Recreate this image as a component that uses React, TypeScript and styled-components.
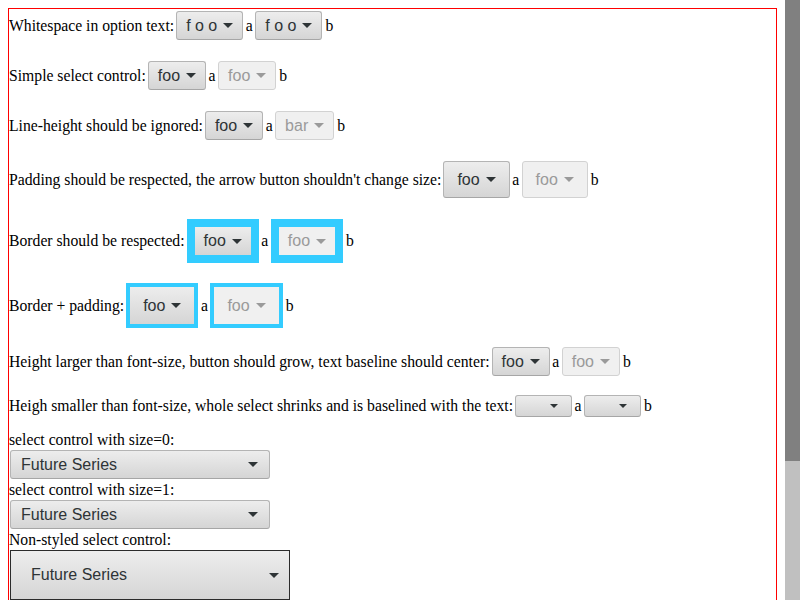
import styled, { createGlobalStyle } from "styled-components"

const GlobalStyle = createGlobalStyle`
    html, body {
        margin: 0;
        background: #ffffff;
    }
    body {
        font-family: "Liberation Serif", "Times New Roman", serif;
        font-size: 15.7px;
        color: #000000;
    }
`

const Page = styled.div`
    display: flex;
    height: 100vh;
    overflow: hidden;
`

const Content = styled.div`
    flex: 1;
    min-width: 0;
    padding: 8px;
`

const ScrollBar = styled.div`
    flex: none;
    width: 15px;
    background: #c0c0c0;
`

const Thumb = styled.div`
    height: 461px;
    background: #808080;
`

const Frame = styled.div`
    border: 1px solid #ff0000;
    min-height: 765px;
`

const Row = styled.div<{ $top: number; $h: number }>`
    display: flex;
    align-items: center;
    white-space: pre;
    margin-top: ${({ $top }) => $top}px;
    height: ${({ $h }) => $h}px;
`

const Lead = styled.span`
    margin-right: 2px;
`

// the little "a" / "b" words between two selects
const Joiner = styled.span<{ $last?: boolean }>`
    margin: ${({ $last }) => ($last ? '0 0 0 3px' : '0 2.5px')};
`

const Caption = styled.div<{ $top?: number }>`
    margin-top: ${({ $top }) => $top ?? 0}px;
    line-height: 18px;
    height: 18px;
`

type FrameKind = 'plain' | 'ring' | 'dark'

const Field = styled.span<{
    $kind?: FrameKind
    $ring?: number
    $disabled?: boolean
    $pad?: number
    $h: number
    $w?: number
    $padL?: number
    $padR?: number
    $spread?: boolean
}>`
    display: inline-flex;
    align-items: center;
    justify-content: ${({ $spread }) => ($spread ? 'space-between' : 'flex-end')};
    gap: 6px;
    box-sizing: border-box;
    flex: none;
    height: ${({ $h }) => $h}px;
    width: ${({ $w }) => ($w ? `${$w}px` : 'auto')};
    padding: 0 ${({ $padR, $pad }) => ($padR ?? 9) + ($pad ?? 0)}px 0 ${({ $padL, $pad }) => ($padL ?? 9) + ($pad ?? 0)}px;
    font-family: "Liberation Sans", Arial, sans-serif;
    font-size: 16px;
    white-space: pre;
    overflow: hidden;
    color: ${({ $disabled }) => ($disabled ? '#9a9a9a' : '#2e3436')};
    background: ${({ $disabled }) => ($disabled ? '#f0f0f0' : 'linear-gradient(#ededed, #d5d5d5)')};
    border: ${({ $kind, $ring, $disabled }) =>
        $kind === 'ring'
            ? `${$ring ?? 8}px solid #33ccff`
            : $kind === 'dark'
            ? '1px solid #2b2b2b'
            : `1px solid ${$disabled ? '#d2d2d2' : '#b4b4b4'}`};
    border-radius: ${({ $kind }) => ($kind === 'plain' || !$kind ? '3px' : '0')};
    ${({ $kind, $disabled }) => ((!$kind || $kind === 'plain') && !$disabled ? 'border-bottom-color: #a6a6a6;' : '')}
`

const Arrow = styled.span<{ $disabled?: boolean; $size?: number }>`
    flex: none;
    width: 0;
    height: 0;
    border-left: ${({ $size }) => ($size ?? 10) / 2}px solid transparent;
    border-right: ${({ $size }) => ($size ?? 10) / 2}px solid transparent;
    border-top: ${({ $size }) => ($size ?? 10) / 2}px solid ${({ $disabled }) => ($disabled ? '#9a9a9a' : '#2e3436')};
`

const BlockField = styled(Field)`
    display: flex;
    margin: 1px 0 2px 1px;
`

type SelectProps = {
    text?: string
    disabled?: boolean
    kind?: FrameKind
    ring?: number
    pad?: number
    h?: number
    w?: number
    arrow?: number
}

function Select({ text, disabled, kind, ring, pad, h = 29, w, arrow }: SelectProps) {
    return (
        <Field
            $kind={kind}
            $ring={ring}
            $disabled={disabled}
            $pad={pad}
            $h={h}
            $w={w}
            $padR={w ? 13 : 9}
            $spread={!!text}
        >
            {text && <span>{text}</span>}
            <Arrow $disabled={disabled} $size={arrow} />
        </Field>
    )
}

export default function App() {
    return (
        <>
            <GlobalStyle />
            <Page>
                <Content>
                    <Frame>
                        <Row $top={2} $h={29}>
                            <Lead>Whitespace in option text:</Lead>
                            <Select text="f o o" />
                            <Joiner>a</Joiner>
                            <Select text="f o o" />
                            <Joiner $last>b</Joiner>
                        </Row>
                        <Row $top={21} $h={29}>
                            <Lead>Simple select control:</Lead>
                            <Select text="foo" />
                            <Joiner>a</Joiner>
                            <Select text="foo" disabled />
                            <Joiner $last>b</Joiner>
                        </Row>
                        <Row $top={21} $h={29}>
                            <Lead>Line-height should be ignored:</Lead>
                            <Select text="foo" />
                            <Joiner>a</Joiner>
                            <Select text="bar" disabled />
                            <Joiner $last>b</Joiner>
                        </Row>
                        <Row $top={21} $h={37}>
                            <Lead>Padding should be respected, the arrow button shouldn't change size:</Lead>
                            <Select text="foo" pad={4} h={37} />
                            <Joiner>a</Joiner>
                            <Select text="foo" pad={4} h={37} disabled />
                            <Joiner $last>b</Joiner>
                        </Row>
                        <Row $top={21} $h={44}>
                            <Lead>Border should be respected:</Lead>
                            <Select text="foo" kind="ring" ring={8} h={44} />
                            <Joiner>a</Joiner>
                            <Select text="foo" kind="ring" ring={8} h={44} disabled />
                            <Joiner $last>b</Joiner>
                        </Row>
                        <Row $top={20} $h={45}>
                            <Lead>Border + padding:</Lead>
                            <Select text="foo" kind="ring" ring={4} pad={4} h={45} />
                            <Joiner>a</Joiner>
                            <Select text="foo" kind="ring" ring={4} pad={4} h={45} disabled />
                            <Joiner $last>b</Joiner>
                        </Row>
                        <Row $top={19} $h={29}>
                            <Lead>Height larger than font-size, button should grow, text baseline should center:</Lead>
                            <Select text="foo" />
                            <Joiner>a</Joiner>
                            <Select text="foo" disabled />
                            <Joiner $last>b</Joiner>
                        </Row>
                        <Row $top={19} $h={22}>
                            <Lead>Heigh smaller than font-size, whole select shrinks and is baselined with the text:</Lead>
                            <Select h={22} w={57} arrow={8} />
                            <Joiner>a</Joiner>
                            <Select h={22} w={57} arrow={8} />
                            <Joiner $last>b</Joiner>
                        </Row>

                        <Caption $top={14}>select control with size=0:</Caption>
                        <BlockField $h={29} $w={260} $padL={10} $padR={11} $spread>
                            <span>Future Series</span>
                            <Arrow />
                        </BlockField>
                        <Caption>select control with size=1:</Caption>
                        <BlockField $h={29} $w={260} $padL={10} $padR={11} $spread>
                            <span>Future Series</span>
                            <Arrow />
                        </BlockField>
                        <Caption>Non-styled select control:</Caption>
                        <BlockField $kind="dark" $h={50} $w={280} $padL={20} $padR={10} $spread>
                            <span>Future Series</span>
                            <Arrow />
                        </BlockField>
                    </Frame>
                </Content>
                <ScrollBar>
                    <Thumb />
                </ScrollBar>
            </Page>
        </>
    )
}
